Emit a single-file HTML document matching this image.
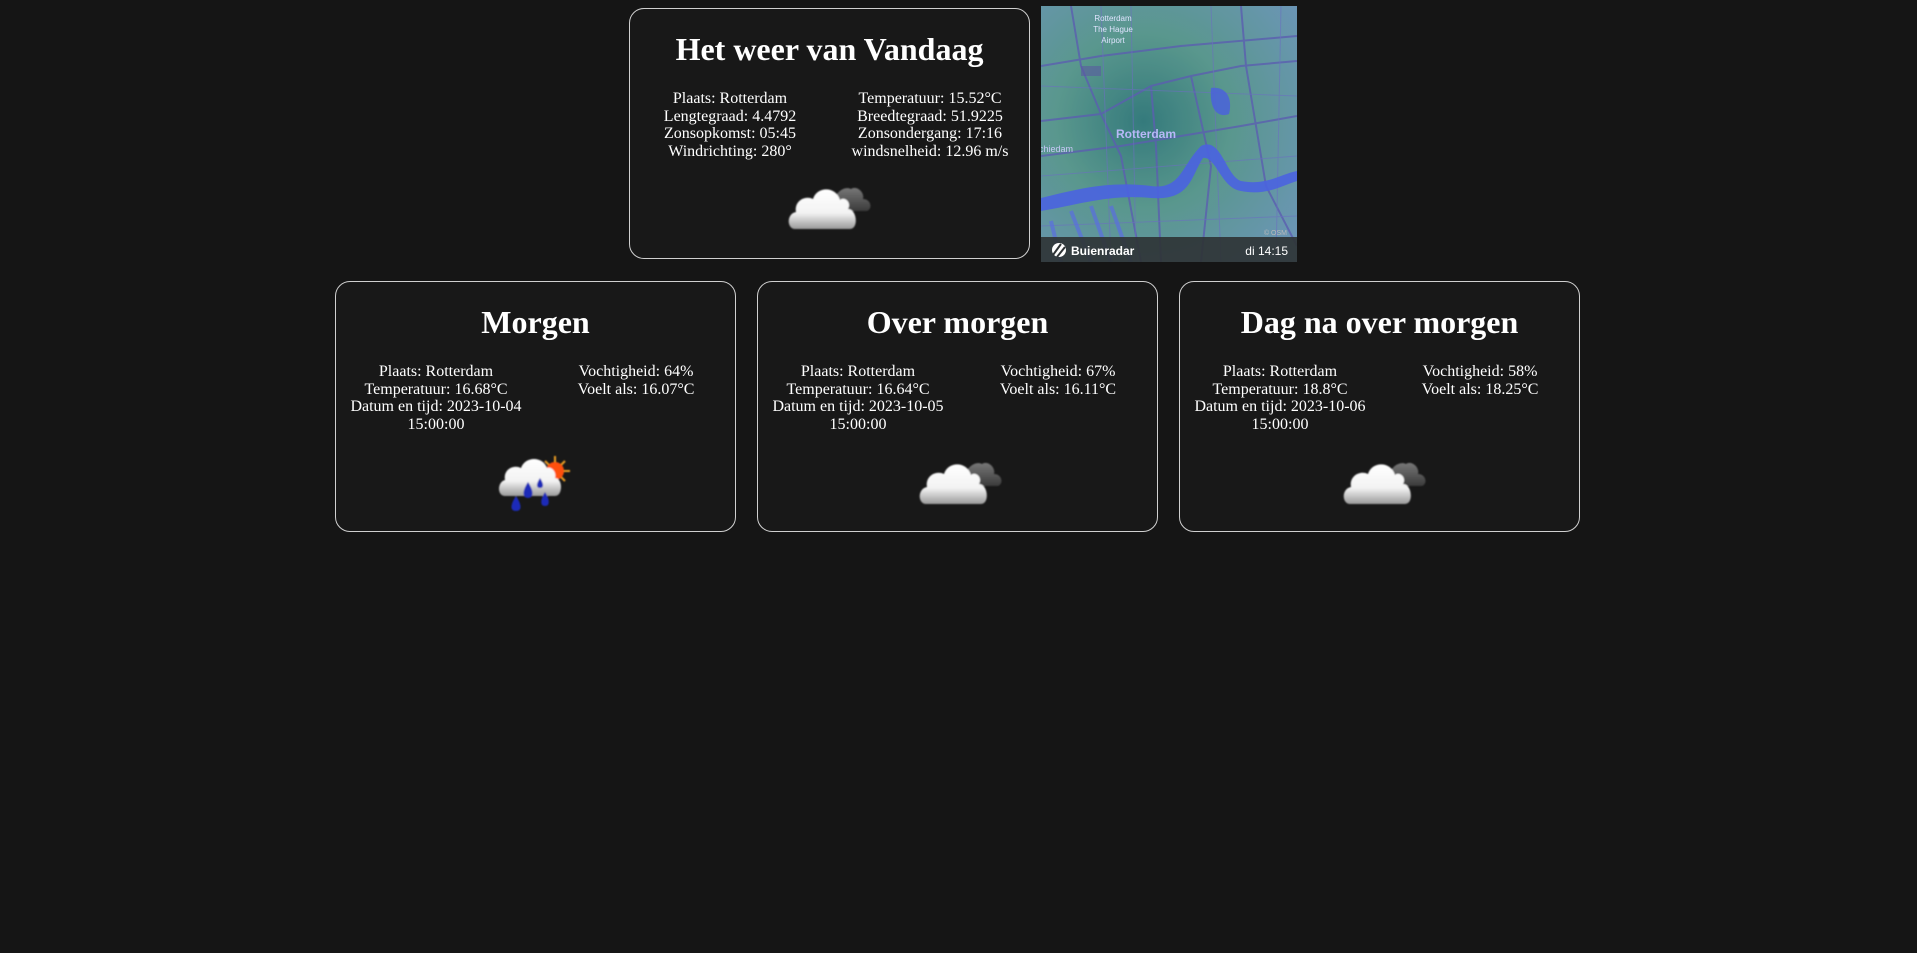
<!DOCTYPE html>
<html><head><meta charset="utf-8"><style>
body{margin:0;background:#151515;width:1917px;height:953px;overflow:hidden;font-family:"Liberation Serif",serif;color:#fff;position:relative}
.card{position:absolute;width:399px;height:249px;border:1px solid #d0d0d0;border-radius:15px;background:#181818}
.card h1{position:absolute;left:0;right:0;top:20px;margin:0;text-align:center;font-size:32px;font-weight:bold;line-height:40px}
.col{position:absolute;width:200px;text-align:center;font-size:16px;line-height:17.7px}
.ic{position:absolute;width:90px;height:50px}
</style></head><body>
<svg width="0" height="0" style="position:absolute"><defs>
<linearGradient id="wg" x1="0" y1="0" x2="0" y2="1"><stop offset="0" stop-color="#fff"/><stop offset=".6" stop-color="#f2f2f2"/><stop offset="1" stop-color="#9a9a9a"/></linearGradient>
<linearGradient id="gg" x1="0" y1="0" x2="0" y2="1"><stop offset="0" stop-color="#777"/><stop offset="1" stop-color="#3a3a3a"/></linearGradient>
<filter id="bl"><feGaussianBlur stdDeviation="0.8"/></filter>
<g id="cl">
<g filter="url(#bl)">
<path d="M46 30 C44 14 56 4 64 8 C70 4 78 12 76 18 C84 18 86 28 80 30 Z" fill="url(#gg)"/>
<path d="M8 48 C0 48 -1 33 9 31 C7 20 18 14 26 18 C30 5 49 5 53 19 C57 15 65 21 61 28 C70 28 72 48 63 48 Z" fill="url(#wg)"/>
</g></g>
</defs></svg>

<div class="card" style="left:629px;top:8px">
<h1>Het weer van Vandaag</h1>
<div class="col" style="left:0;top:81px">Plaats: Rotterdam<br>Lengtegraad: 4.4792<br>Zonsopkomst: 05:45<br>Windrichting: 280°</div>
<div class="col" style="left:200px;top:81px">Temperatuur: 15.52°C<br>Breedtegraad: 51.9225<br>Zonsondergang: 17:16<br>windsnelheid: 12.96 m/s</div>
<svg class="ic" style="left:157px;top:172px" viewBox="0 0 90 50"><use href="#cl"/></svg>
</div>

<svg style="position:absolute;left:1041px;top:6px" width="256" height="256" viewBox="0 0 256 256">
<defs><radialGradient id="mg" cx=".4" cy=".45" r=".75"><stop offset="0" stop-color="#2f7c70"/><stop offset=".45" stop-color="#5a9e84"/><stop offset="1" stop-color="#6f9cb4"/></radialGradient></defs>
<rect width="256" height="256" fill="url(#mg)"/>
<rect x="0" y="0" width="256" height="256" fill="#5a6fc0" opacity=".15"/>
<g fill="none" stroke="#5b5fb0" stroke-width="2" opacity=".8">
<path d="M0 115 L60 108 L110 80 L150 70 L200 60 L256 55"/>
<path d="M30 0 L40 60 L60 108 L80 150 L100 256"/>
<path d="M200 0 L205 60 L215 120 L225 180 L256 240"/>
<path d="M0 150 L80 140 L140 130 L200 120 L256 110"/>
<path d="M110 80 L115 140 L120 256"/>
<path d="M0 60 L60 50 L140 40 L256 30"/>
<path d="M150 70 L170 160 L160 256"/>
</g>
<g fill="none" stroke="#6a70c0" stroke-width="1" opacity=".6">
<path d="M0 80 L256 90 M0 170 L256 150 M60 0 L70 256 M170 0 L180 256 M240 0 L235 256 M0 220 L256 210 M90 0 L95 256"/>
</g>
<path d="M0 192 C40 182 70 175 110 180 C140 184 140 160 160 140 C180 130 185 170 200 175 C225 180 240 168 256 165 L256 175 C240 180 225 190 200 185 C180 182 175 150 162 152 C150 170 150 195 110 192 C70 188 40 198 0 205 Z" fill="#4a63e0" opacity=".9"/>
<path d="M30 205 L50 256 M50 200 L70 256 M70 200 L90 256 M10 215 L20 256" stroke="#5a6fe0" stroke-width="4" opacity=".7"/>
<path d="M170 82 C185 80 192 92 188 108 C178 112 168 105 170 82Z" fill="#4a5fe0" opacity=".8"/>
<path d="M40 60 L60 60 L60 70 L40 70Z" fill="#5a5aa0" opacity=".6"/>
<text x="72" y="15" font-family="Liberation Sans,sans-serif" font-size="8" fill="#e0e4ff" text-anchor="middle">Rotterdam</text>
<text x="72" y="26" font-family="Liberation Sans,sans-serif" font-size="8" fill="#e0e4ff" text-anchor="middle">The Hague</text>
<text x="72" y="37" font-family="Liberation Sans,sans-serif" font-size="8" fill="#e0e4ff" text-anchor="middle">Airport</text>
<text x="105" y="132" font-family="Liberation Sans,sans-serif" font-size="12" font-weight="bold" fill="#b8b8f8" text-anchor="middle">Rotterdam</text>
<text x="-2" y="146" font-family="Liberation Sans,sans-serif" font-size="9" fill="#c8c8f8">chiedam</text>
<text x="246" y="229" font-family="Liberation Sans,sans-serif" font-size="7" fill="#bbb" text-anchor="end">© OSM</text>
<rect x="0" y="231" width="256" height="25" fill="#2f3436" opacity=".92"/>
<circle cx="18" cy="244" r="7" fill="#fff"/>
<path d="M12 249 L20 238 M16 251 L24 241" stroke="#2f3436" stroke-width="2"/>
<text x="30" y="249" font-family="Liberation Sans,sans-serif" font-size="12" font-weight="bold" fill="#fff">Buienradar</text>
<text x="247" y="249" font-family="Liberation Sans,sans-serif" font-size="12" fill="#fff" text-anchor="end">di 14:15</text>
</svg>

<div class="card" style="left:335px;top:281px">
<h1>Morgen</h1>
<div class="col" style="left:0;top:81px">Plaats: Rotterdam<br>Temperatuur: 16.68°C<br>Datum en tijd: 2023-10-04<br>15:00:00</div>
<div class="col" style="left:200px;top:81px">Vochtigheid: 64%<br>Voelt als: 16.07°C</div>
<svg style="position:absolute;left:161px;top:172px" width="80" height="62" viewBox="0 0 80 62">
<g filter="url(#bl)">
<g stroke="#f0a020" stroke-width="2"><path d="M58 2 L58 32 M43 17 L73 17 M48 7 L68 27 M68 7 L48 27"/></g>
<circle cx="58" cy="17" r="9" fill="#ff5010"/>
<path d="M8 42 C0 42 0 28 8 26 C6 16 16 10 24 14 C28 2 46 2 50 14 C54 12 60 18 58 24 C66 24 66 42 58 42 Z" fill="url(#wg)"/>
<path d="M31 28 C25 37 25 44 31 44 C37 44 37 37 31 28Z" fill="#1a2ab8"/>
<path d="M43 24 C39 30 39 34 43 34 C47 34 47 30 43 24Z" fill="#1a2ab8"/>
<path d="M19 42 C13 51 13 57 19 57 C25 57 25 51 19 42Z" fill="#1a2ab8"/>
<path d="M48 38 C43 46 43 52 48 52 C53 52 53 46 48 38Z" fill="#1a2ab8"/>
</g></svg>
</div>

<div class="card" style="left:757px;top:281px">
<h1>Over morgen</h1>
<div class="col" style="left:0;top:81px">Plaats: Rotterdam<br>Temperatuur: 16.64°C<br>Datum en tijd: 2023-10-05<br>15:00:00</div>
<div class="col" style="left:200px;top:81px">Vochtigheid: 67%<br>Voelt als: 16.11°C</div>
<svg class="ic" style="left:160px;top:174px" viewBox="0 0 90 50"><use href="#cl"/></svg>
</div>

<div class="card" style="left:1179px;top:281px">
<h1>Dag na over morgen</h1>
<div class="col" style="left:0;top:81px">Plaats: Rotterdam<br>Temperatuur: 18.8°C<br>Datum en tijd: 2023-10-06<br>15:00:00</div>
<div class="col" style="left:200px;top:81px">Vochtigheid: 58%<br>Voelt als: 18.25°C</div>
<svg class="ic" style="left:162px;top:174px" viewBox="0 0 90 50"><use href="#cl"/></svg>
</div>
</body></html>
